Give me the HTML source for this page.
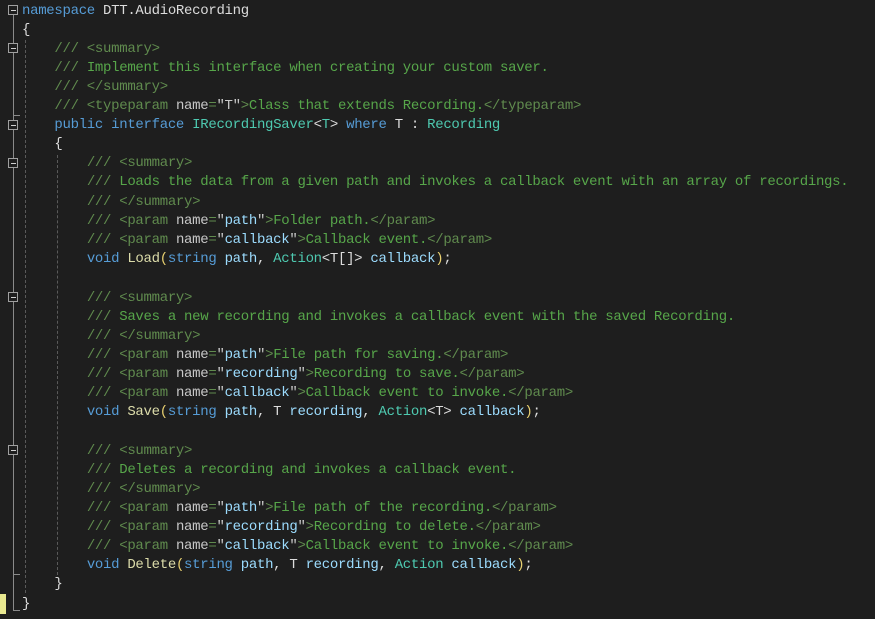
<!DOCTYPE html><html><head><style>
body{margin:0;background:#1e1e1e;width:875px;height:619px;overflow:hidden;position:relative;font-family:"Liberation Mono",monospace;font-size:14px;letter-spacing:-0.3px}
.l{position:absolute;left:22px;white-space:pre;height:19px;line-height:19px;color:#dcdcdc}
.k{color:#569cd6}.t{color:#4ec9b0}.c{color:#57a64a}.d{color:#608b4e}.a{color:#c8c8c8}.s{color:#9cdcfe}.m{color:#dcdcaa}.p{color:#9cdcfe}.g{color:#e8d070}
.f{position:absolute;left:8px;width:8px;height:8px;border:1px solid #a0a0a0;background:#1e1e1e}
.f:after{content:"";position:absolute;left:2px;top:4px;width:5px;height:1px;background:#d0d0d0}
.v{position:absolute;width:0;border-left:1px dashed #5a5a5a}
</style></head><body>
<div style="position:absolute;left:13px;top:14px;width:1px;height:597px;background:#8a8a8a"></div>
<div style="position:absolute;left:14px;top:610px;width:6px;height:1px;background:#8a8a8a"></div>
<div style="position:absolute;left:14px;top:115px;width:6px;height:1px;background:#8a8a8a"></div>
<div style="position:absolute;left:14px;top:574px;width:6px;height:1px;background:#8a8a8a"></div>
<div style="position:absolute;left:0;top:594px;width:6px;height:20px;background:#e8e890"></div>
<div class="v" style="left:25px;top:40px;height:553px"></div>
<div class="v" style="left:57px;top:155px;height:420px"></div>
<div class="f" style="top:5px"></div><div class="f" style="top:43px"></div><div class="f" style="top:120px"></div><div class="f" style="top:158px"></div><div class="f" style="top:292px"></div><div class="f" style="top:445px"></div>
<div class="l" style="top:2px"><span class="k">namespace</span> DTT.AudioRecording</div>
<div class="l" style="top:21px">{</div>
<div class="l" style="top:40px">    <span class="d">/// &lt;summary&gt;</span></div>
<div class="l" style="top:59px">    <span class="d">///</span><span class="c"> Implement this interface when creating your custom saver.</span></div>
<div class="l" style="top:78px">    <span class="d">/// &lt;/summary&gt;</span></div>
<div class="l" style="top:97px">    <span class="d">/// &lt;typeparam </span><span class="a">name</span><span class="d">=</span><span class="a">"T"</span><span class="d">&gt;</span><span class="c">Class that extends Recording.</span><span class="d">&lt;/typeparam&gt;</span></div>
<div class="l" style="top:116px">    <span class="k">public interface</span> <span class="t">IRecordingSaver</span>&lt;<span class="t">T</span>&gt; <span class="k">where</span> T : <span class="t">Recording</span></div>
<div class="l" style="top:135px">    {</div>
<div class="l" style="top:154px">        <span class="d">/// &lt;summary&gt;</span></div>
<div class="l" style="top:173px">        <span class="d">///</span><span class="c"> Loads the data from a given path and invokes a callback event with an array of recordings.</span></div>
<div class="l" style="top:193px">        <span class="d">/// &lt;/summary&gt;</span></div>
<div class="l" style="top:212px">        <span class="d">/// &lt;param </span><span class="a">name</span><span class="d">=</span><span class="a">"</span><span class="s">path</span><span class="a">"</span><span class="d">&gt;</span><span class="c">Folder path.</span><span class="d">&lt;/param&gt;</span></div>
<div class="l" style="top:231px">        <span class="d">/// &lt;param </span><span class="a">name</span><span class="d">=</span><span class="a">"</span><span class="s">callback</span><span class="a">"</span><span class="d">&gt;</span><span class="c">Callback event.</span><span class="d">&lt;/param&gt;</span></div>
<div class="l" style="top:250px">        <span class="k">void</span> <span class="m">Load</span><span class="g">(</span><span class="k">string</span> <span class="p">path</span>, <span class="t">Action</span>&lt;T[]&gt; <span class="p">callback</span><span class="g">)</span>;</div>
<div class="l" style="top:289px">        <span class="d">/// &lt;summary&gt;</span></div>
<div class="l" style="top:308px">        <span class="d">///</span><span class="c"> Saves a new recording and invokes a callback event with the saved Recording.</span></div>
<div class="l" style="top:327px">        <span class="d">/// &lt;/summary&gt;</span></div>
<div class="l" style="top:346px">        <span class="d">/// &lt;param </span><span class="a">name</span><span class="d">=</span><span class="a">"</span><span class="s">path</span><span class="a">"</span><span class="d">&gt;</span><span class="c">File path for saving.</span><span class="d">&lt;/param&gt;</span></div>
<div class="l" style="top:365px">        <span class="d">/// &lt;param </span><span class="a">name</span><span class="d">=</span><span class="a">"</span><span class="s">recording</span><span class="a">"</span><span class="d">&gt;</span><span class="c">Recording to save.</span><span class="d">&lt;/param&gt;</span></div>
<div class="l" style="top:384px">        <span class="d">/// &lt;param </span><span class="a">name</span><span class="d">=</span><span class="a">"</span><span class="s">callback</span><span class="a">"</span><span class="d">&gt;</span><span class="c">Callback event to invoke.</span><span class="d">&lt;/param&gt;</span></div>
<div class="l" style="top:403px">        <span class="k">void</span> <span class="m">Save</span><span class="g">(</span><span class="k">string</span> <span class="p">path</span>, T <span class="p">recording</span>, <span class="t">Action</span>&lt;T&gt; <span class="p">callback</span><span class="g">)</span>;</div>
<div class="l" style="top:442px">        <span class="d">/// &lt;summary&gt;</span></div>
<div class="l" style="top:461px">        <span class="d">///</span><span class="c"> Deletes a recording and invokes a callback event.</span></div>
<div class="l" style="top:480px">        <span class="d">/// &lt;/summary&gt;</span></div>
<div class="l" style="top:499px">        <span class="d">/// &lt;param </span><span class="a">name</span><span class="d">=</span><span class="a">"</span><span class="s">path</span><span class="a">"</span><span class="d">&gt;</span><span class="c">File path of the recording.</span><span class="d">&lt;/param&gt;</span></div>
<div class="l" style="top:518px">        <span class="d">/// &lt;param </span><span class="a">name</span><span class="d">=</span><span class="a">"</span><span class="s">recording</span><span class="a">"</span><span class="d">&gt;</span><span class="c">Recording to delete.</span><span class="d">&lt;/param&gt;</span></div>
<div class="l" style="top:537px">        <span class="d">/// &lt;param </span><span class="a">name</span><span class="d">=</span><span class="a">"</span><span class="s">callback</span><span class="a">"</span><span class="d">&gt;</span><span class="c">Callback event to invoke.</span><span class="d">&lt;/param&gt;</span></div>
<div class="l" style="top:556px">        <span class="k">void</span> <span class="m">Delete</span><span class="g">(</span><span class="k">string</span> <span class="p">path</span>, T <span class="p">recording</span>, <span class="t">Action</span> <span class="p">callback</span><span class="g">)</span>;</div>
<div class="l" style="top:575px">    }</div>
<div class="l" style="top:595px">}</div>
</body></html>
